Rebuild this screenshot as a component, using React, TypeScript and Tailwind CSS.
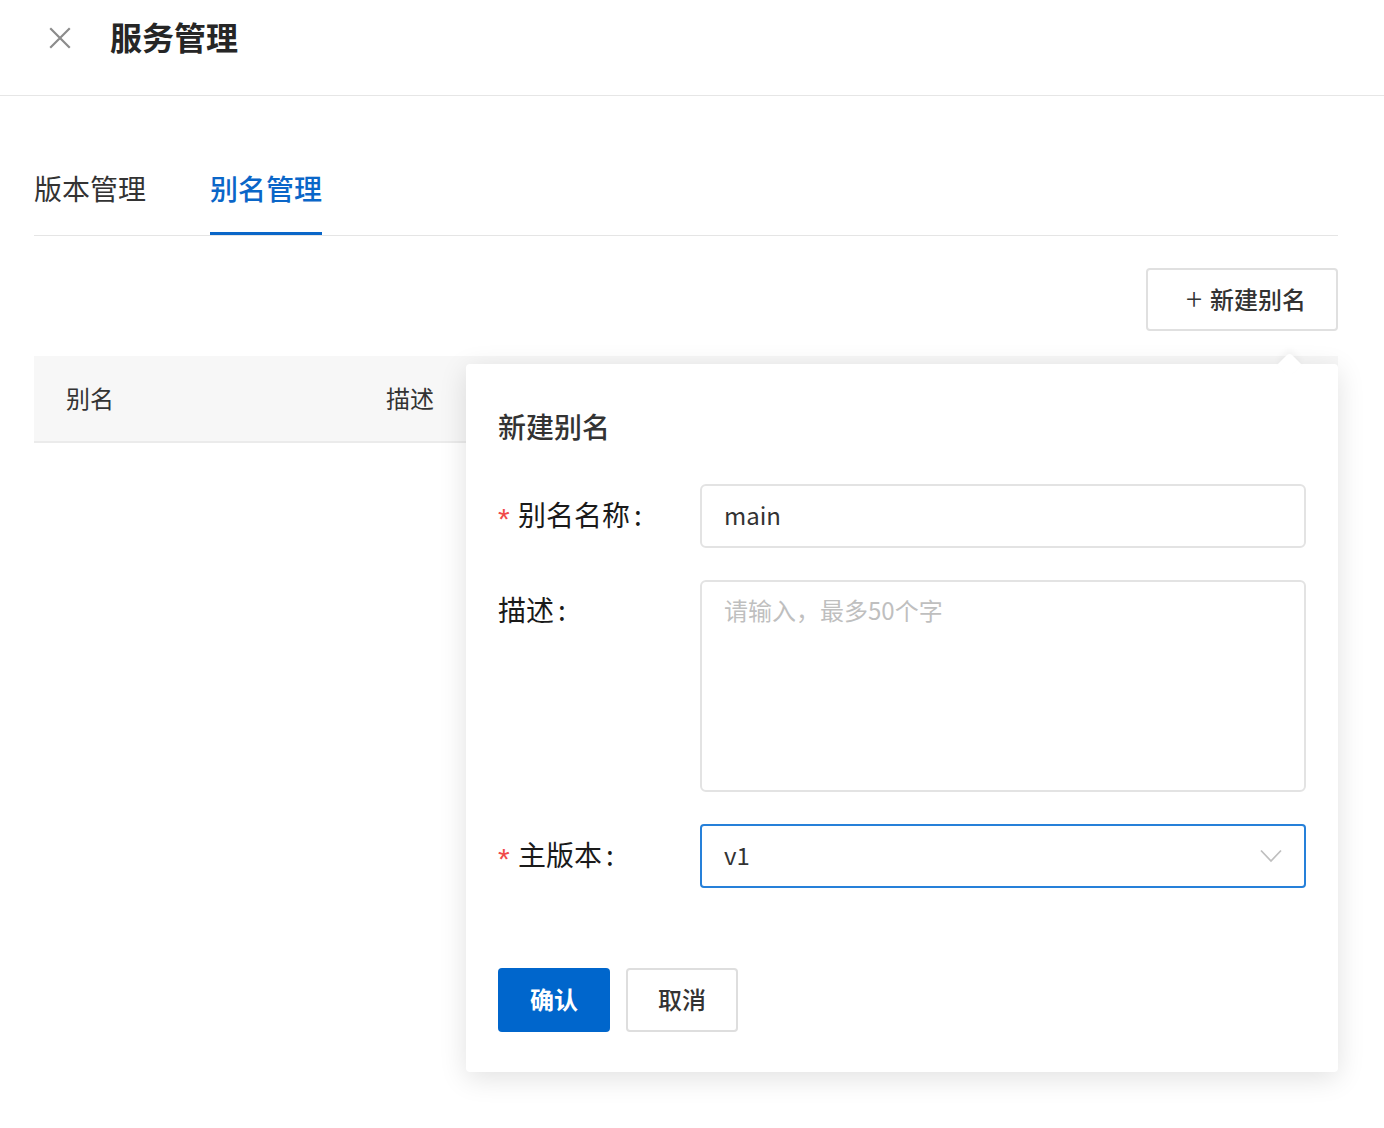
import React from "react"

const font = { fontFamily: '"Noto Sans CJK SC", "Noto Sans", sans-serif' }

const CloseIcon = () => (
  <svg width="24" height="24" viewBox="0 0 24 24" fill="none" stroke="#8c8c8c" strokeWidth="2.2" strokeLinecap="square">
    <path d="M3 3 L21 21 M21 3 L3 21" />
  </svg>
)

const Chevron = () => (
  <svg width="22" height="14" viewBox="0 0 22 14" fill="none" stroke="#bfbfbf" strokeWidth="1.8">
    <path d="M1 1.5 L11 12 L21 1.5" />
  </svg>
)

const Label = ({ text, required }: { text: string; required?: boolean }) => (
  <div className="w-[202px] shrink-0 flex items-center h-[64px] text-[28px] leading-[40px] text-[#1a1a1a] -mt-[2px]">
    {required && (
      <span className="text-[#f04a4a] text-[30px] w-[20px] leading-[30px] pt-[10px]" style={{ fontFamily: '"Liberation Sans", sans-serif' }}>
        *
      </span>
    )}
    <span>{text}</span>
    <span className="ml-[4px]">:</span>
  </div>
)

export default function App() {
  return (
    <div className="min-h-[1128px] bg-white relative" style={font}>
      <header className="h-[96px] border-b border-[#e6e6e6]">
        <div className="h-[72px] flex items-center pl-[48px]">
          <div className="mt-[4px]">
            <CloseIcon />
          </div>
          <h1 className="ml-[38px] text-[32px] leading-[44px] font-bold text-[#262626]">服务管理</h1>
        </div>
      </header>

      <div className="ml-[34px] w-[1304px]">
        <div className="mt-[72px] flex gap-[64px] border-b border-[#e5e5e5]">
          <div className="text-[28px] leading-[40px] pb-[27px] text-[#333]">版本管理</div>
          <div className="text-[28px] leading-[40px] pb-[24px] font-medium text-[#0a66c8] border-b-[3px] border-[#0a66c8]">别名管理</div>
        </div>

        <div className="flex justify-end mt-[32px]">
          <button className="h-[63px] w-[192px] border-2 border-[#e0e0e0] rounded-[4px] flex items-center justify-center pl-[8px] pb-[2px] text-[24px] font-medium text-[#333]">
            <span className="text-[30px] font-light leading-none mr-[8px] -mt-[3px]">+</span>
            新建别名
          </button>
        </div>

        <div className="mt-[25px] h-[87px] bg-[#f7f7f7] border-b-2 border-[#ebebeb] flex items-center pb-[2px] text-[24px] text-[#333]">
          <div className="w-[320px] pl-[32px]">别名</div>
          <div className="pl-[32px]">描述</div>
        </div>
      </div>

      <div className="absolute left-[466px] top-[364px] w-[872px] h-[708px] bg-white rounded-[4px] shadow-[0_6px_28px_rgba(0,0,0,0.12)] px-[32px] pt-[42px]">
        <div className="absolute -top-[8px] right-[40px] w-[17px] h-[17px] rotate-45 bg-white rounded-tl-[4px] shadow-[-3px_-3px_6px_rgba(0,0,0,0.04)]" />
        <h2 className="text-[28px] leading-[40px] font-medium text-[#333]">新建别名</h2>

        <div className="mt-[38px] flex flex-col gap-[32px]">
          <div className="flex">
            <Label text="别名名称" required />
            <div className="flex-1 h-[64px] border-2 border-[#e3e3e3] rounded-[6px] flex items-center px-[22px] pb-[2px] text-[24px] text-[#333]">
              main
            </div>
          </div>

          <div className="flex">
            <div className="w-[202px] shrink-0 pt-[9px] text-[28px] leading-[40px] text-[#1a1a1a]">
              描述<span className="ml-[4px]">:</span>
            </div>
            <div className="flex-1 h-[212px] border-2 border-[#e3e3e3] rounded-[6px] px-[22px] pt-[12px] text-[24px] leading-[32px] text-[#bfbfbf]">
              请输入，最多50个字
            </div>
          </div>

          <div className="flex">
            <Label text="主版本" required />
            <div className="flex-1 h-[64px] border-2 border-[#2680d9] rounded-[4px] flex items-center justify-between pl-[22px] pr-[22px] text-[24px] text-[#333]">
              <span className="-mt-[2px]">v1</span>
              <Chevron />
            </div>
          </div>
        </div>

        <div className="mt-[80px] flex gap-[16px]">
          <button className="w-[112px] h-[64px] bg-[#0066cc] rounded-[4px] text-white text-[24px] font-bold pb-[2px]">确认</button>
          <button className="w-[112px] h-[64px] border-2 border-[#dedede] rounded-[4px] text-[#333] text-[24px] font-medium pb-[2px]">取消</button>
        </div>
      </div>
    </div>
  )
}
